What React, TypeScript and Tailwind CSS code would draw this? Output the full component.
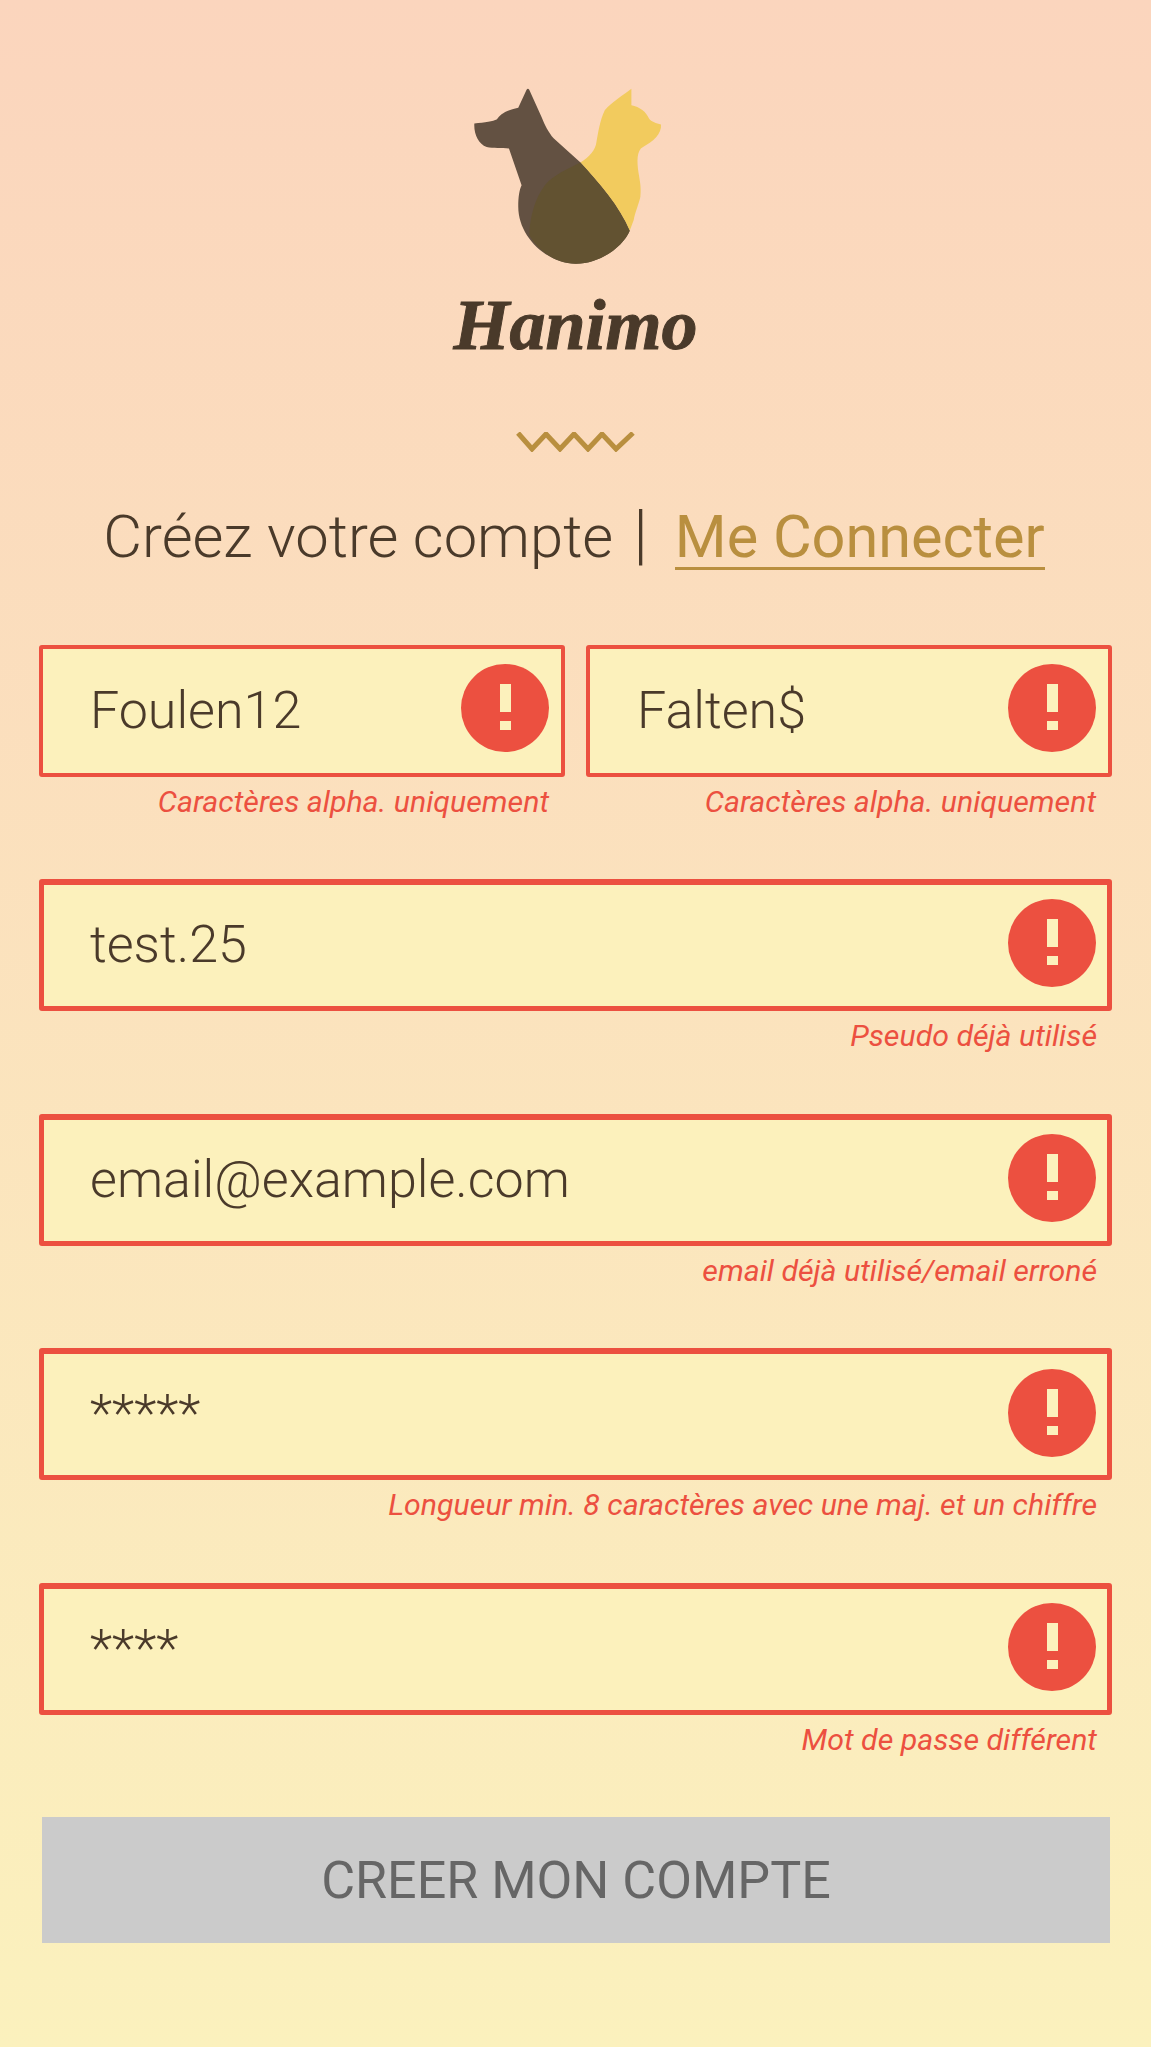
import React from "react";

type FieldProps = {
  value: string;
  message: string;
  thin?: boolean;
  iconLow?: boolean;
};

function ErrorIcon({ thin, low }: { thin?: boolean; low?: boolean }) {
  return (
    <svg
      viewBox="0 0 88 88"
      className={
        (thin ? "right-[12px] top-[15px]" : low ? "right-[11px] top-[15px]" : "right-[11px] top-[14px]") +
        " absolute h-[88px] w-[88px]"
      }
    >
      <circle cx="44" cy="44" r="44" fill="#ec5040" />
      <rect x="39" y="20" width="11" height="28" fill="#fcf1bc" />
      <rect x="39" y="57" width="11" height="9" fill="#fcf1bc" />
    </svg>
  );
}

function Field({ value, message, thin, iconLow }: FieldProps) {
  return (
    <div className="h-[234.4px] min-w-0 flex-1">
      <div
        className={
          thin
            ? "relative h-[132px] rounded-[3px] border-[4px] border-[#ec5040] bg-[#fcf1bc]"
            : "relative h-[132px] rounded-[3px] border-[5px] border-t-[6px] border-[#ec5040] bg-[#fcf1bc]"
        }
      >
        <input
          readOnly
          value={value}
          className={
            thin
              ? "h-full w-full bg-transparent pb-[2px] pl-[47px] pr-[110px] text-[52px] font-light text-[#4a3a2a] outline-none"
              : "h-full w-full bg-transparent pb-[2px] pl-[46px] pr-[110px] text-[52px] font-light text-[#4a3a2a] outline-none"
          }
        />
        <ErrorIcon thin={thin} low={iconLow} />
      </div>
      <p
        className={
          thin
            ? "mt-[6px] pr-[16px] text-right text-[30.3px] leading-[38px] text-[#ec5040] italic"
            : "mt-[6px] pr-[15px] text-right text-[30.3px] leading-[38px] text-[#ec5040] italic"
        }
      >
        {message}
      </p>
    </div>
  );
}

function Logo() {
  return (
    <svg viewBox="130 50 566 535" className="ml-[473px] h-[178px] w-[189px]">
      <path
        fill="#635142"
        d="M133 160C165 157 190 153 200 148C212 132 222 122 265 112L290 58Q294 53 298 58L335 140C345 165 355 185 372 205L452 277C510 340 570 410 600 482C580 530 510 582 437 581C350 580 265 500 265 410C265 380 268 360 275 345L237 235C215 232 190 235 170 230C145 222 131 190 133 160Z"
      />
      <path
        fill="#f2cb5e"
        d="M605 55L605 105C630 110 650 125 658 145C665 155 680 160 694 163C697 190 670 215 640 230C620 240 622 275 626 305C630 330 635 350 632 380C628 400 615 430 612 450L600 482C570 410 510 340 452 277C480 258 497 240 500 215C505 190 510 150 525 120C545 95 580 75 605 55Z"
      />
      <path
        fill="#625231"
        d="M452 277C415 295 370 315 345 345C315 385 300 440 298 495C330 550 385 581 437 581C510 582 580 530 600 482C570 410 510 340 452 277Z"
      />
    </svg>
  );
}

export default function App() {
  return (
    <div className="h-[2047px] w-full overflow-hidden bg-gradient-to-b from-[#fbd5bd] to-[#fbf1bd] pt-[87px] font-['Roboto',sans-serif]">
      <Logo />
      <h1 className="mt-[20px] text-center font-['Liberation_Serif',serif] text-[72px] leading-[80px] font-bold text-[#4a3a2a] italic [-webkit-text-stroke:1px_#4a3a2a]">
        Hanimo
      </h1>
      <svg viewBox="0 0 120 20" className="mx-auto mt-[67px] h-[20px] w-[120px]">
        <polyline
          points="2,1 16,17 30,2 44,17 58,2 72,17 86,2 100,17 117,1"
          fill="none"
          stroke="#b98f3f"
          strokeWidth="5"
        />
      </svg>
      <div className="mt-[53px] flex h-[65px] items-baseline justify-center pr-[3px] text-[59.7px] leading-[60px] font-light text-[#4a3a2a]">
        <span>Créez votre compte</span>
        <span className="ml-[20px] mr-[27px] text-[66px] leading-[60px]">|</span>
        <span className="border-b-[3px] border-[#b98f3f] text-[59.4px] font-normal text-[#b98f3f]">Me Connecter</span>
      </div>
      <div className="mt-[75px] pl-[39px] pr-[39px]">
        <div className="flex gap-[21px]">
          <Field thin value="Foulen12" message="Caractères alpha. uniquement" />
          <Field thin value="Falten$" message="Caractères alpha. uniquement" />
        </div>
        <Field value="test.25" message="Pseudo déjà utilisé" />
        <Field value="email@example.com" message="email déjà utilisé/email erroné" />
        <Field iconLow value="*****" message="Longueur min. 8 caractères avec une maj. et un chiffre" />
        <Field value="****" message="Mot de passe différent" />
        <button className="mx-[3px] h-[126px] w-[1068px] bg-[#cbcbcb] pt-[2px] text-[52px] text-[#666666]">CREER MON COMPTE</button>
      </div>
    </div>
  );
}
